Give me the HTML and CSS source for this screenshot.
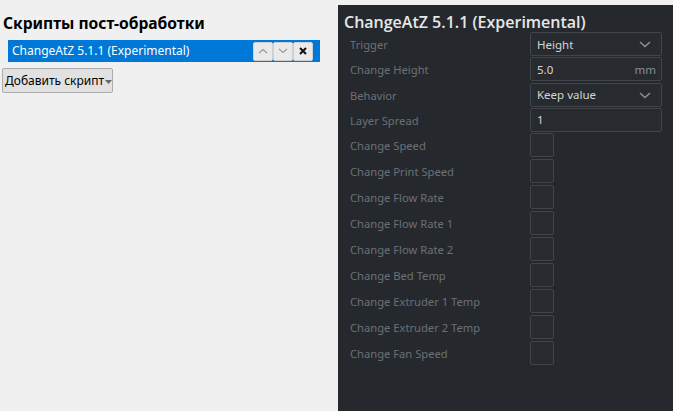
FILE: index.html
```html
<!DOCTYPE html>
<html>
<head>
<meta charset="utf-8">
<link rel="stylesheet" href="styles.css">
</head>
<body>
<div class="window">
  <div class="left">
    <h1 class="left-title">Скрипты пост-обработки</h1>
    <div class="script-list">
      <div class="script-item">
        <span class="script-name">ChangeAtZ 5.1.1 (Experimental)</span>
        <div class="item-buttons">
          <button class="tool-btn" title="up">
            <svg width="10" height="6" viewBox="0 0 10 6"><path d="M1 5 L5 1.5 L9 5" fill="none" stroke="#9a9a9a" stroke-width="1.2"/></svg>
          </button>
          <button class="tool-btn" title="down">
            <svg width="10" height="6" viewBox="0 0 10 6"><path d="M1 1 L5 4.5 L9 1" fill="none" stroke="#9a9a9a" stroke-width="1.2"/></svg>
          </button>
          <button class="tool-btn" title="remove">
            <svg width="8" height="8" viewBox="0 0 8 8"><path d="M1 1 L7 7 M7 1 L1 7" fill="none" stroke="#111" stroke-width="2"/></svg>
          </button>
        </div>
      </div>
    </div>
    <button class="add-btn">Добавить скрипт<svg class="add-arrow" width="7" height="4" viewBox="0 0 7 4"><path d="M0 0 H7 L3.5 4 Z" fill="#666"/></svg></button>
  </div>
  <div class="right">
    <h2 class="right-title">ChangeAtZ 5.1.1 (Experimental)</h2>
    <div class="settings">
      <div class="row input-row">
        <span class="label">Trigger</span>
        <div class="control combo"><span>Height</span>
          <svg class="chev" width="12" height="7" viewBox="0 0 12 7"><path d="M1 1 L6 5.5 L11 1" fill="none" stroke="#8e9296" stroke-width="1.4"/></svg>
        </div>
      </div>
      <div class="row input-row">
        <span class="label">Change Height</span>
        <div class="control field"><span>5.0</span><span class="unit">mm</span></div>
      </div>
      <div class="row input-row">
        <span class="label">Behavior</span>
        <div class="control combo"><span>Keep value</span>
          <svg class="chev" width="12" height="7" viewBox="0 0 12 7"><path d="M1 1 L6 5.5 L11 1" fill="none" stroke="#8e9296" stroke-width="1.4"/></svg>
        </div>
      </div>
      <div class="row input-row">
        <span class="label">Layer Spread</span>
        <div class="control field"><span>1</span></div>
      </div>
      <div class="row check-row"><span class="label">Change Speed</span><div class="checkbox"></div></div>
      <div class="row check-row"><span class="label">Change Print Speed</span><div class="checkbox"></div></div>
      <div class="row check-row"><span class="label">Change Flow Rate</span><div class="checkbox"></div></div>
      <div class="row check-row"><span class="label">Change Flow Rate 1</span><div class="checkbox"></div></div>
      <div class="row check-row"><span class="label">Change Flow Rate 2</span><div class="checkbox"></div></div>
      <div class="row check-row"><span class="label">Change Bed Temp</span><div class="checkbox"></div></div>
      <div class="row check-row"><span class="label">Change Extruder 1 Temp</span><div class="checkbox"></div></div>
      <div class="row check-row"><span class="label">Change Extruder 2 Temp</span><div class="checkbox"></div></div>
      <div class="row check-row"><span class="label">Change Fan Speed</span><div class="checkbox"></div></div>
    </div>
  </div>
</div>
</body>
</html>
```
FILE: styles.css
```css
* { box-sizing: border-box; }
html, body { margin: 0; padding: 0; }
body {
  width: 673px;
  height: 411px;
  overflow: hidden;
  background: #f0f0f0;
  font-family: "Noto Sans", "Open Sans", sans-serif;
}
.window {
  display: flex;
  height: 411px;
}
.left {
  width: 338px;
  flex: none;
  display: flex;
  flex-direction: column;
  align-items: flex-start;
}
.left-title {
  margin: 13px 0 0 3px;
  font-size: 15.6px;
  line-height: 21px;
  font-weight: bold;
  color: #000;
}
.script-list {
  margin: 6px 0 0 8px;
  width: 312px;
}
.script-item {
  height: 22px;
  background: #0078d7;
  display: flex;
  align-items: center;
  justify-content: space-between;
  padding: 0 7px 0 4px;
}
.script-name {
  color: #fff;
  font-size: 12px;
  line-height: 22px;
}
.item-buttons {
  display: flex;
}
.tool-btn {
  width: 20px;
  height: 19px;
  margin: 0;
  padding: 0;
  background: #eaeaea;
  border: 1px solid #d0d0d0;
  border-radius: 2px;
  display: flex;
  align-items: center;
  justify-content: center;
}
.add-btn {
  margin: 6px 0 0 2px;
  width: 111px;
  height: 25px;
  padding: 0 0 0 2px;
  background: #e1e1e1;
  border: 1px solid #adadad;
  border-radius: 2px;
  font-family: "Noto Sans", "Open Sans", sans-serif;
  font-size: 12px;
  color: #000;
  display: flex;
  align-items: center;
  white-space: nowrap;
}
.add-arrow { margin-left: 1px; margin-top: 2px; flex: none; }
.right {
  flex: 1;
  margin-top: 5px;
  background: #25292e;
  padding: 0 0 0 6px;
}
.right-title {
  margin: 7px 0 0 0;
  font-family: "Open Sans", "Noto Sans", sans-serif;
  font-size: 16px;
  line-height: 20px;
  font-weight: 600;
  color: #e6e7e8;
}
.settings {
  display: flex;
  flex-direction: column;
  padding-left: 6px;
}
.row {
  display: flex;
  align-items: flex-start;
}
.input-row { height: 25.25px; }
.check-row { height: 26px; }
.label {
  width: 180px;
  flex: none;
  font-size: 11.2px;
  line-height: 25px;
  color: #6c7075;
}
.control {
  width: 132px;
  height: 24px;
  border: 1px solid #41454a;
  border-radius: 2px;
  background: #272b30;
  display: flex;
  align-items: center;
  justify-content: space-between;
  padding: 0 10px 0 6px;
  font-size: 11.5px;
  color: #d4d5d6;
}
.field { padding-right: 5px; }
.unit { color: #8a8e92; }
.chev { margin-top: 1px; }
.checkbox {
  width: 24px;
  height: 24px;
  border: 1px solid #41454a;
  border-radius: 2px;
  background: #272b30;
}
```
